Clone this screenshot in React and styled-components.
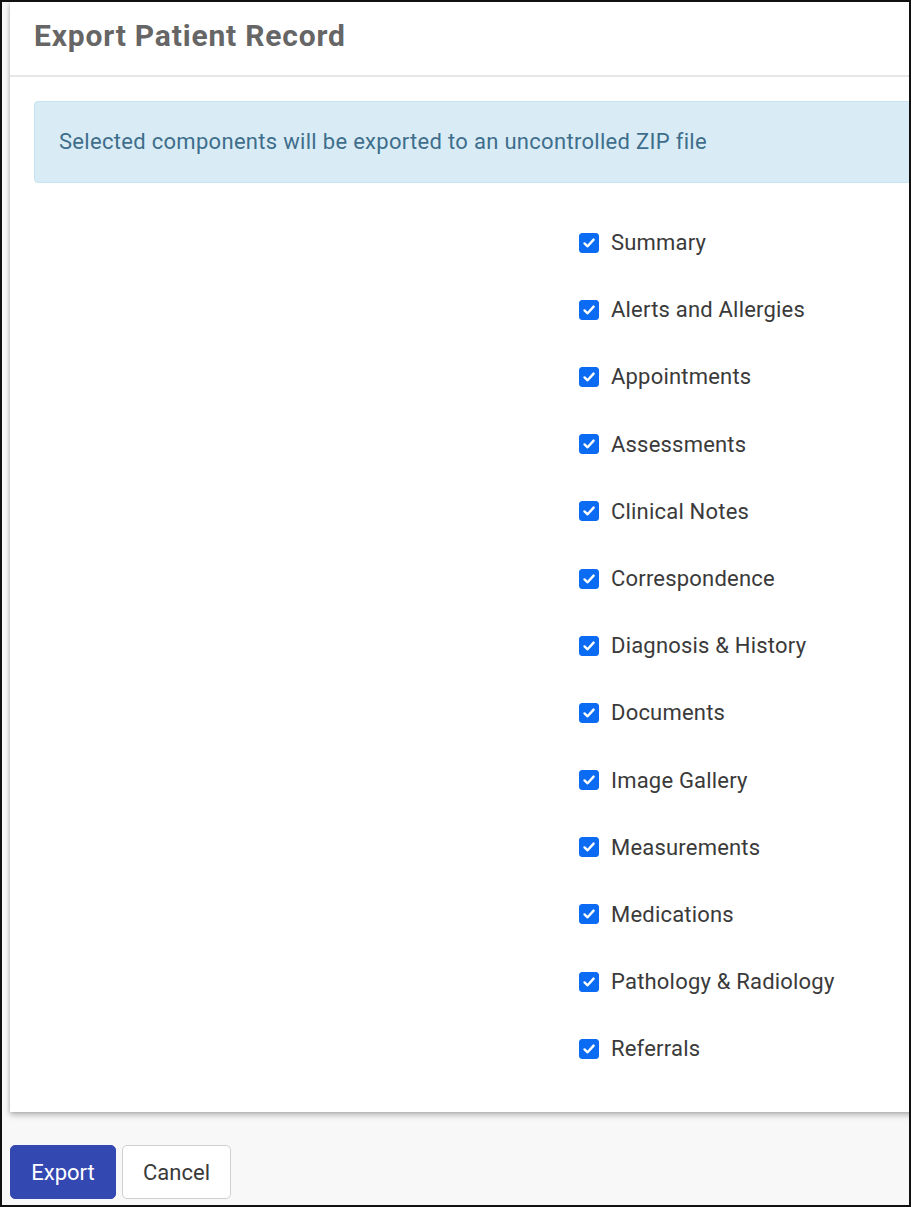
import React from "react"
import styled, { createGlobalStyle } from "styled-components"

const GlobalStyle = createGlobalStyle`
	html, body {
		margin: 0;
		padding: 0;
		background: #ffffff;
		font-family: Roboto, "Liberation Sans", Arial, sans-serif;
	}
	* {
		box-sizing: border-box;
	}
`

const Frame = styled.div`
	width: 911px;
	height: 1207px;
	border: 2px solid #111111;
	background: #f8f8f8;
	overflow: hidden;
	display: flex;
	flex-direction: column;
`

const Panel = styled.section`
	margin-left: 8px;
	margin-right: -40px;
	background: #ffffff;
	box-shadow: 0 3px 6px rgba(0, 0, 0, 0.28), 0 0 3px rgba(0, 0, 0, 0.12);
`

const Header = styled.header`
	height: 75px;
	display: flex;
	align-items: center;
	padding: 0 24px 6px;
	border-bottom: 2px solid #e6e6e6;

	h1 {
		margin: 0;
		font-size: 30px;
		font-weight: 700;
		color: #666666;
		letter-spacing: 0.8px;
	}
`

const Body = styled.div`
	padding: 24px 24px 30px;
`

const Alert = styled.div`
	height: 82px;
	display: flex;
	align-items: center;
	padding: 0 24px 2px;
	background: #d9ecf5;
	border: 1px solid #c3e4f0;
	border-radius: 4px;
	color: #3e6e8c;
	font-size: 22px;
	letter-spacing: 0.3px;
`

const Columns = styled.div`
	display: grid;
	grid-template-columns: 545px 1fr;
	margin-top: 26px;
`

const List = styled.ul`
	list-style: none;
	margin: 0;
	padding: 0;
`

const Item = styled.li`
	height: 67.2px;
	display: flex;
	align-items: center;
	gap: 12px;
	font-size: 22px;
	letter-spacing: 0.2px;
	color: #3a3a3a;
`

const Box = styled.span`
	width: 20px;
	height: 20px;
	border-radius: 3px;
	background: ${props => (props.checked ? "#0b6cf3" : "#ffffff")};
	border: 1px solid ${props => (props.checked ? "#0b6cf3" : "#999999")};
	display: flex;
	align-items: center;
	justify-content: center;
	flex-shrink: 0;
`

const Footer = styled.footer`
	display: flex;
	gap: 6px;
	margin-top: 33px;
	margin-left: 8px;
`

const Button = styled.button`
	height: 54px;
	padding: 0 20px;
	border-radius: 5px;
	font-family: Roboto, "Liberation Sans", Arial, sans-serif;
	font-size: 22px;
	cursor: pointer;
	background: ${props => (props.primary ? "#3448b2" : "#ffffff")};
	color: ${props => (props.primary ? "#ffffff" : "#3a3a3a")};
	border: 1px solid ${props => (props.primary ? "#3448b2" : "#d0d0d0")};
	min-width: ${props => (props.primary ? "106px" : "109px")};
`

const items = [
	"Summary",
	"Alerts and Allergies",
	"Appointments",
	"Assessments",
	"Clinical Notes",
	"Correspondence",
	"Diagnosis & History",
	"Documents",
	"Image Gallery",
	"Measurements",
	"Medications",
	"Pathology & Radiology",
	"Referrals"
]

const Check = () => (
	<svg width="14" height="14" viewBox="0 0 14 14">
		<path d="M2.5 7.4 L5.6 10.3 L11.6 3.6" fill="none" stroke="#ffffff" strokeWidth="2.4" strokeLinecap="round" strokeLinejoin="round" />
	</svg>
)

export default function App() {
	return (
		<>
			<GlobalStyle />
			<Frame>
				<Panel>
					<Header>
						<h1>Export Patient Record</h1>
					</Header>
					<Body>
						<Alert>Selected components will be exported to an uncontrolled ZIP file</Alert>
						<Columns>
							<div />
							<List>
								{items.map(label => (
									<Item key={label}>
										<Box checked>
											<Check />
										</Box>
										{label}
									</Item>
								))}
							</List>
						</Columns>
					</Body>
				</Panel>
				<Footer>
					<Button primary>Export</Button>
					<Button>Cancel</Button>
				</Footer>
			</Frame>
		</>
	)
}
